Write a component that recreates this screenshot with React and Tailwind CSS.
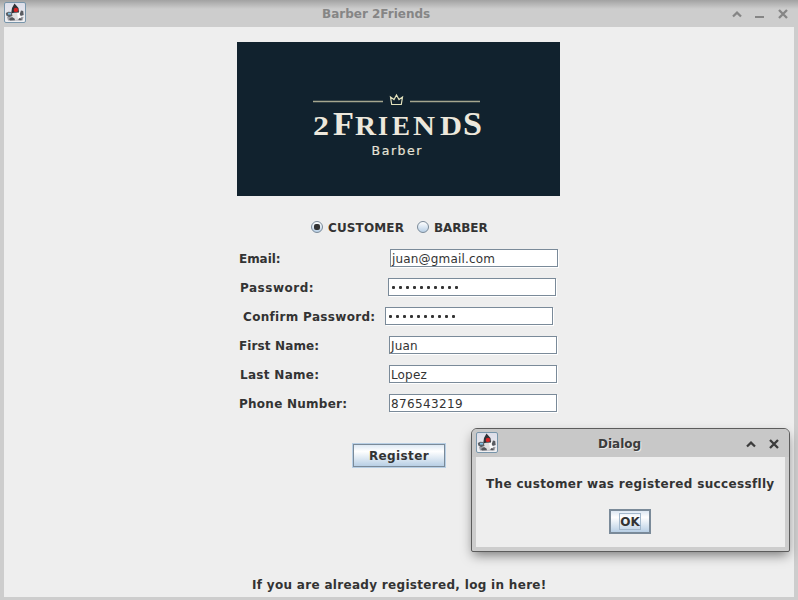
import React from "react";

function DukeIcon() {
  return (
    <svg width="22" height="21" viewBox="0 0 22 21" className="block shrink-0">
      <defs>
        <linearGradient id="duke" x1="0" y1="0" x2="0" y2="1">
          <stop offset="0" stopColor="#dcdde8" />
          <stop offset="1" stopColor="#f1f1f3" />
        </linearGradient>
      </defs>
      <rect x="0.5" y="0.5" width="21" height="20" rx="1.5" fill="url(#duke)" stroke="#7895aa" />
      <path d="M3 15h16.500l-1 3.500H4z" fill="#a0a0a6" />
      <path d="M8 9l-1 8 4 1 6-.5-.3-7.500-2.700-3z" fill="#dededf" />
      <path d="M13 10.500l3.500-1 .5 6-3 1z" fill="#fbfbfb" />
      <path d="M10.500 1.500L8 6l-.8 5.500 2.800-.8 5-.2-.5-4.500z" fill="#2f3136" />
      <path d="M1.800 11l2.500-1.200L7.500 10l1 4-3.500 1.200-2.700-1.700z" fill="#5c6066" />
      <path d="M4 10.800h3v1.800H4z" fill="#7fc0e4" />
      <path d="M17 8.500l2.200.5.500 4-3 1-1-2z" fill="#5a5c61" />
      <path d="M5 17l3-2 2.500 1.500.5 1.800-5 .2zM15.500 16l2.500.8-.8 1.500-3-.3z" fill="#55565b" />
      <circle cx="11.900" cy="7.900" r="2.200" fill="#d92323" />
    </svg>
  );
}

function Up() {
  return (
    <svg width="10" height="7" viewBox="0 0 10 7" className="block" fill="none" stroke="currentColor" strokeWidth="2.300">
      <path d="M1 5.500L5 1.700l4 3.800" />
    </svg>
  );
}

function Close() {
  return (
    <svg width="10" height="10" viewBox="0 0 10 10" className="block" fill="none" stroke="currentColor" strokeWidth="2.300">
      <path d="M1 1l8 8M9 1L1 9" />
    </svg>
  );
}

const logoLetters = [
  ["2", 313, 27, 16],
  ["F", 333, 33, 21],
  ["R", 355, 28, 21],
  ["I", 378, 28, 10],
  ["E", 392, 28, 18],
  ["N", 413, 28, 22],
  ["D", 440, 28, 22],
  ["S", 463, 34, 19],
];

function Logo() {
  return (
    <svg width="323" height="154" viewBox="237 42 323 154" className="ml-[233px] block shrink-0 bg-[#11222e]">
      <path d="M313 101.500h70M410 101.500h70" stroke="#a5a68f" strokeWidth="1.500" />
      <path d="M391.700 104.500L390.500 97l3.500 2.500 2.500-4.500 2.500 4.500 3.500-2.500-1.200 7.500z" fill="none" stroke="#e3e2bd" strokeWidth="1.200" />
      <g fill="#ede8dc" fontFamily="'Liberation Serif', serif" fontWeight="700">
        {logoLetters.map(([ch, x, size, width], i) => (
          <text key={i} x={x} y="135" fontSize={size} textLength={width} lengthAdjust="spacingAndGlyphs">{ch}</text>
        ))}
      </g>
      <text x="371.500" y="154.500" fontSize="12.500" fontWeight="400" fill="#e6e3d7" stroke="#e6e3d7" strokeWidth="0.200" fontFamily="'DejaVu Sans', sans-serif" textLength="50">Barber</text>
    </svg>
  );
}

const fieldClass =
  "h-[18px] w-[168px] shrink-0 border border-[#7a8a99] bg-white pl-[1px] font-normal leading-[18px] text-[#333] shadow-[1px_1px_0_#fff] whitespace-nowrap";

function Row({ label, labelClass, children }) {
  return (
    <div className="flex h-[29px] items-start">
      <span className={`shrink-0 whitespace-nowrap leading-[20px] ${labelClass}`}>{label}</span>
      {children}
    </div>
  );
}

function Dots() {
  return (
    <div className="flex h-[17px] items-center gap-1 pl-[2px]">
      {Array.from({ length: 10 }, (_, i) => (
        <i key={i} className="h-[3px] w-[3px] rounded-[1px] bg-[#333]" />
      ))}
    </div>
  );
}

export default function App() {
  return (
    <div className="relative flex h-[600px] w-[798px] flex-col overflow-hidden bg-[#cdcdcd] font-['DejaVu_Sans',sans-serif] text-[12px] font-bold text-[#333]">
      <header className="flex h-[27px] shrink-0 items-start bg-[linear-gradient(#a2a2a2,#cdcdcd_9px)] pl-1 pt-[2px]">
        <DukeIcon />
        <span className="ml-[296px] w-[109px] whitespace-nowrap pt-[2px] leading-[20px] text-[#858585]">Barber 2Friends</span>
        <div className="ml-auto flex text-[#858585]">
          <span className="mr-[13px] mt-[9px]"><Up /></span>
          <span className="mr-[14px] mt-[14px] h-[2px] w-[9px] bg-[#858585]" />
          <span className="mr-[10px] mt-[7px]"><Close /></span>
        </div>
      </header>
      <main className="mx-1 mb-[3px] flex min-h-0 flex-1 flex-col bg-[#eee] pt-[15px]">
        <Logo />
        <div className="ml-[307px] mt-[21px] flex h-5 items-center leading-5">
          <i className="flex h-3 w-3 items-center justify-center rounded-full border border-[#7a8a99] bg-gradient-to-b from-white to-[#b8cfe5]">
            <b className="h-[6px] w-[6px] rounded-[2px] bg-[#333]" />
          </i>
          <span className="ml-[5px] w-[89px] whitespace-nowrap pt-px tracking-[0.13px]">CUSTOMER</span>
          <i className="h-3 w-3 rounded-full border border-[#7a8a99] bg-gradient-to-b from-white to-[#b8cfe5]" />
          <span className="ml-[5px] whitespace-nowrap pt-px tracking-[-0.12px]">BARBER</span>
        </div>
        <div className="mt-3 flex flex-col">
          <Row label="Email:" labelClass="ml-[235px] w-[151px] tracking-[-0.05px]"><div className={`${fieldClass} tracking-[0.17px]`}>juan@gmail.com</div></Row>
          <Row label="Password:" labelClass="ml-[236px] w-[148px] tracking-[0.52px]"><div className={fieldClass}><Dots /></div></Row>
          <Row label="Confirm Password:" labelClass="ml-[239px] w-[142px] tracking-[0.32px]"><div className={fieldClass}><Dots /></div></Row>
          <Row label="First Name:" labelClass="ml-[235px] w-[150px] tracking-[0.12px]"><div className={`${fieldClass} tracking-[0.2px]`}>Juan</div></Row>
          <Row label="Last Name:" labelClass="ml-[236px] w-[149px] tracking-[0.3px]"><div className={`${fieldClass} tracking-[0.15px]`}>Lopez</div></Row>
          <Row label="Phone Number:" labelClass="ml-[235px] w-[150px] tracking-[0.26px]"><div className={`${fieldClass} tracking-[0.36px]`}>876543219</div></Row>
        </div>
        <button className="ml-[348px] mt-5 flex h-[25px] w-[94px] shrink-0 items-center justify-center border border-[#b8cfe5] font-bold">
          <span className="flex h-[23px] w-[92px] items-center justify-center border border-[#7a8a99] bg-[linear-gradient(#dde8f3,#fff_30%,#b8cfe5)] tracking-[0.38px]">Register</span>
        </button>
        <p className="ml-[248px] mt-[107px] whitespace-nowrap leading-[20px] tracking-[0.31px]">If you are already registered, log in here!</p>
      </main>
      <section className="absolute left-[471px] top-[428px] flex h-[124px] w-[319px] flex-col rounded-t-[6px] rounded-b-[2px] border border-[#5c5c5c] bg-[#cdcdcd] shadow-[0_5px_12px_-2px_rgba(0,0,0,0.5)]">
        <div className="flex h-7 shrink-0 items-start rounded-t-[5px] bg-[#c8c8c8] pl-1 pt-[3px]">
          <DukeIcon />
          <span className="ml-[100px] whitespace-nowrap pt-[2px] leading-[20px] text-[#3c3c3c] [text-shadow:1px_1px_0_#e8e8e8]">Dialog</span>
          <div className="ml-auto flex text-[#3c3c3c]">
            <span className="mr-[13px] mt-[9px]"><Up /></span>
            <span className="mr-[10px] mt-[7px]"><Close /></span>
          </div>
        </div>
        <div className="mx-1 mb-1 flex min-h-0 flex-1 flex-col bg-[#eee] pt-[17px]">
          <p className="ml-[10px] whitespace-nowrap leading-[20px] tracking-[0.34px]">The customer was registered successflly</p>
          <button className="ml-[133px] mt-[15px] flex h-[25px] w-[42px] shrink-0 items-center justify-center border-2 border-[#7a8a99] bg-[linear-gradient(#dde8f3,#fff_30%,#b8cfe5)] font-bold">
            <span className="flex h-[17px] w-[22px] items-center justify-center border border-[#a3b8cc]">OK</span>
          </button>
        </div>
      </section>
    </div>
  );
}
